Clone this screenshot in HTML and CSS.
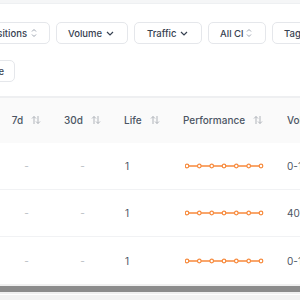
FILE: index.html
```html
<!DOCTYPE html>
<html>
<head>
<meta charset="utf-8">
<link rel="stylesheet" href="styles.css">
</head>
<body>
<div class="topstrip"></div>
<div class="filters">
  <div class="frow">
    <button class="btn btn-first"><span>Positions</span> <svg class="ud" viewBox="0 0 6 10" width="6" height="10"><path d="M1 3.5 L3 1.5 L5 3.5 M1 6.5 L3 8.5 L5 6.5" fill="none" stroke="#9ca3af" stroke-width="1"/></svg></button>
    <button class="btn btn-vol"><span>Volume</span> <svg class="chev" viewBox="0 0 8 5" width="8" height="5"><path d="M1 1 L4 4 L7 1" fill="none" stroke="#374151" stroke-width="1.2"/></svg></button>
    <button class="btn btn-tr"><span>Traffic</span> <svg class="chev" viewBox="0 0 8 5" width="8" height="5"><path d="M1 1 L4 4 L7 1" fill="none" stroke="#374151" stroke-width="1.2"/></svg></button>
    <button class="btn btn-cl"><span>All Cl</span> <svg class="ud" viewBox="0 0 6 10" width="6" height="10"><path d="M1 3.5 L3 1.5 L5 3.5 M1 6.5 L3 8.5 L5 6.5" fill="none" stroke="#9ca3af" stroke-width="1"/></svg></button>
    <button class="btn btn-tag"><span>Tags</span></button>
  </div>
  <div class="frow">
    <button class="btn btn-save"><span>Save</span></button>
  </div>
</div>
<div class="table">
  <div class="thead">
    <div class="c c7 center">7d <svg class="sort" viewBox="0 0 10 10" width="10" height="10"><path d="M3 9 V1.5 M1 3.5 L3 1.5 L5 3.5 M7 1 V8.5 M5 6.5 L7 8.5 L9 6.5" fill="none" stroke="#b0b4ba" stroke-width="1"/></svg></div>
    <div class="c c30 center">30d <svg class="sort" viewBox="0 0 10 10" width="10" height="10"><path d="M3 9 V1.5 M1 3.5 L3 1.5 L5 3.5 M7 1 V8.5 M5 6.5 L7 8.5 L9 6.5" fill="none" stroke="#b0b4ba" stroke-width="1"/></svg></div>
    <div class="c clife">Life <svg class="sort" viewBox="0 0 10 10" width="10" height="10"><path d="M3 9 V1.5 M1 3.5 L3 1.5 L5 3.5 M7 1 V8.5 M5 6.5 L7 8.5 L9 6.5" fill="none" stroke="#b0b4ba" stroke-width="1"/></svg></div>
    <div class="c cperf">Performance <svg class="sort" viewBox="0 0 10 10" width="10" height="10"><path d="M3 9 V1.5 M1 3.5 L3 1.5 L5 3.5 M7 1 V8.5 M5 6.5 L7 8.5 L9 6.5" fill="none" stroke="#b0b4ba" stroke-width="1"/></svg></div>
    <div class="c cvol">Volume</div>
  </div>
  <div class="trow">
    <div class="c c7 center dash">-</div>
    <div class="c c30 center dash">-</div>
    <div class="c clife">1</div>
    <div class="c cperf"><svg class="spark" viewBox="0 0 80 6" width="80" height="6"><path d="M2 3 H76" stroke="#f7893b" stroke-width="1.5"/><g fill="#fff" stroke="#f7893b" stroke-width="1.2"><circle cx="2" cy="3" r="1.8"/><circle cx="14.3" cy="3" r="1.8"/><circle cx="26.7" cy="3" r="1.8"/><circle cx="39" cy="3" r="1.8"/><circle cx="51.3" cy="3" r="1.8"/><circle cx="63.7" cy="3" r="1.8"/><circle cx="76" cy="3" r="1.8"/></g></svg></div>
    <div class="c cvol">0-100</div>
  </div>
  <div class="trow">
    <div class="c c7 center dash">-</div>
    <div class="c c30 center dash">-</div>
    <div class="c clife">1</div>
    <div class="c cperf"><svg class="spark" viewBox="0 0 80 6" width="80" height="6"><path d="M2 3 H76" stroke="#f7893b" stroke-width="1.5"/><g fill="#fff" stroke="#f7893b" stroke-width="1.2"><circle cx="2" cy="3" r="1.8"/><circle cx="14.3" cy="3" r="1.8"/><circle cx="26.7" cy="3" r="1.8"/><circle cx="39" cy="3" r="1.8"/><circle cx="51.3" cy="3" r="1.8"/><circle cx="63.7" cy="3" r="1.8"/><circle cx="76" cy="3" r="1.8"/></g></svg></div>
    <div class="c cvol">40-100</div>
  </div>
  <div class="trow">
    <div class="c c7 center dash">-</div>
    <div class="c c30 center dash">-</div>
    <div class="c clife">1</div>
    <div class="c cperf"><svg class="spark" viewBox="0 0 80 6" width="80" height="6"><path d="M2 3 H76" stroke="#f7893b" stroke-width="1.5"/><g fill="#fff" stroke="#f7893b" stroke-width="1.2"><circle cx="2" cy="3" r="1.8"/><circle cx="14.3" cy="3" r="1.8"/><circle cx="26.7" cy="3" r="1.8"/><circle cx="39" cy="3" r="1.8"/><circle cx="51.3" cy="3" r="1.8"/><circle cx="63.7" cy="3" r="1.8"/><circle cx="76" cy="3" r="1.8"/></g></svg></div>
    <div class="c cvol">0-100</div>
  </div>
</div>
<div class="scroll"><div class="thumb"></div></div>
<div class="bottomstrip"></div>
</body>
</html>
```
FILE: styles.css
```css
html, body {
  margin: 0;
  padding: 0;
  background: #fff;
  overflow: hidden;
  width: 300px;
  height: 300px;
}
body {
  font-family: Inter, "Noto Sans", sans-serif;
  font-size: 10px;
  color: #374151;
}
.topstrip {
  height: 3px;
  background: #f5f6f7;
  border-bottom: 1px solid #eef0f2;
}
.filters {
  padding: 18px 0 14px;
  display: flex;
  flex-direction: column;
  gap: 16px;
}
.frow {
  display: flex;
  gap: 6px;
  white-space: nowrap;
}
.btn {
  flex: none;
  height: 22px;
  box-sizing: border-box;
  border: 1px solid #e5e7eb;
  border-radius: 5px;
  background: #fff;
  font-family: inherit;
  font-size: 9.5px;
  font-weight: 500;
  color: #374151;
  display: flex;
  align-items: center;
  justify-content: space-between;
  padding: 0 11px;
}
.btn svg { flex: none; display: block; }
.btn-first { width: 80px; margin-left: -30px; padding-right: 12px; justify-content: flex-end; gap: 4px; }
.btn-vol { width: 72px; padding-right: 13px; }
.btn-tr { width: 68px; padding-right: 13px; padding-left: 12px; }
.btn-cl { width: 58px; padding-right: 13px; }
.btn-tag { width: 60px; }
.btn-save { width: 45px; margin-left: -30px; justify-content: flex-end; padding-right: 10px; }
.table {
  width: 340px;
}
.thead, .trow {
  display: grid;
  grid-template-columns: 53px 59px 59px 104px 65px;
  align-items: center;
  height: 47px;
}
.thead {
  background: #fafafa;
  border-top: 2px solid #eeeff1;
  box-sizing: border-box;
  font-weight: 500;
  color: #4b5563;
  padding-bottom: 2px;
}
.trow {
  border-bottom: 1px solid #f1f2f4;
  box-sizing: border-box;
  color: #4b5563;
}
.trow:last-child { border-bottom: none; }
.c {
  display: flex;
  align-items: center;
  gap: 8px;
  white-space: nowrap;
}
.center { justify-content: center; }
.clife { padding-left: 12px; }
.cperf { padding-left: 12px; }
.cvol { padding-left: 12px; }
.trow .clife { padding-left: 13px; }
.trow .cperf { padding-left: 14px; }
.dash { color: #b8bcc2; }
.sort { flex: none; }
.spark { display: block; }
.scroll {
  height: 10px;
  background: #f0f0f0;
  display: flex;
  align-items: center;
}
.thumb {
  height: 6px;
  width: 100%;
  background: #8c8c8c;
}
.bottomstrip {
  height: 10px;
  background: #f3f3f3;
  border-top: 1px solid #fff;
}
```
